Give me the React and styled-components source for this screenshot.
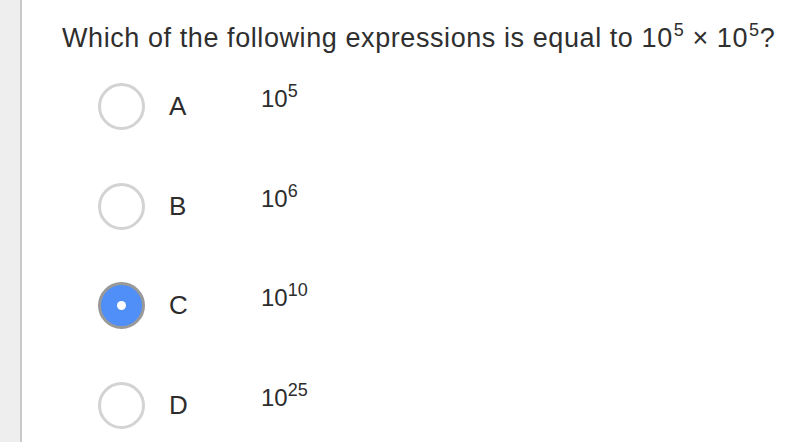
import styled, { createGlobalStyle } from "styled-components";

const GlobalStyle = createGlobalStyle`
  html, body {
    margin: 0;
    padding: 0;
    background: #ffffff;
  }
  body {
    font-family: "Liberation Sans", Arial, sans-serif;
    color: #2d2d2d;
  }
`;

const options = [
  { letter: "A", base: "10", exp: "5" },
  { letter: "B", base: "10", exp: "6" },
  { letter: "C", base: "10", exp: "10", selected: true },
  { letter: "D", base: "10", exp: "25" },
];

const App = () => {
  return (
    <Page>
      <GlobalStyle />
      <Gutter />
      <Content>
        <Question>
          Which of the following expressions is equal to 10<Sup>5</Sup> × 10
          <Sup>5</Sup>?
        </Question>
        <OptionList>
          {options.map((o) => (
            <Option key={o.letter}>
              <Radio $selected={o.selected} />
              <Letter>{o.letter}</Letter>
              <Value>
                {o.base}
                <ValueSup>{o.exp}</ValueSup>
              </Value>
            </Option>
          ))}
        </OptionList>
      </Content>
    </Page>
  );
};

export default App;

/* ---------------------------- STYLED COMPONENTS --------------------------- */

const Page = styled.div`
  display: flex;
  width: 800px;
  height: 442px;
  overflow: hidden;
`;

const Gutter = styled.div`
  width: 20px;
  flex-shrink: 0;
  background: #eeeeee;
  border-right: 2px solid #c9c9c9;
`;

const Content = styled.div`
  flex: 1;
  padding: 21px 0 0 40px;
`;

const Question = styled.div`
  font-size: 27px;
  line-height: 34px;
  letter-spacing: 0.58px;
  color: #2f2f2f;
  white-space: nowrap;
`;

const Sup = styled.sup`
  font-size: 18px;
  line-height: 0;
  position: relative;
  top: -1px;
  margin-left: 1px;
`;

const OptionList = styled.div`
  display: flex;
  flex-direction: column;
  padding: 2px 0 0 36px;
`;

const Option = styled.div`
  display: flex;
  align-items: center;
  height: 99.5px;
`;

const Radio = styled.div`
  box-sizing: border-box;
  width: 47px;
  height: 47px;
  border-radius: 50%;
  flex-shrink: 0;
  display: flex;
  align-items: center;
  justify-content: center;
  border: 3px solid ${(p) => (p.$selected ? "#999999" : "#d3d3d3")};
  background: ${(p) => (p.$selected ? "#4f8ff7" : "#ffffff")};
  &::after {
    content: "";
    display: ${(p) => (p.$selected ? "block" : "none")};
    width: 9px;
    height: 9px;
    border-radius: 50%;
    background: #ffffff;
  }
`;

const Letter = styled.div`
  width: 116px;
  padding-left: 24px;
  box-sizing: border-box;
  flex-shrink: 0;
  font-size: 26px;
  color: #2d2d2d;
`;

const Value = styled.div`
  font-size: 24px;
  color: #2d2d2d;
  margin-top: -15px;
`;

const ValueSup = styled.sup`
  font-size: 18px;
  line-height: 0;
  position: relative;
  top: -1px;
`;
